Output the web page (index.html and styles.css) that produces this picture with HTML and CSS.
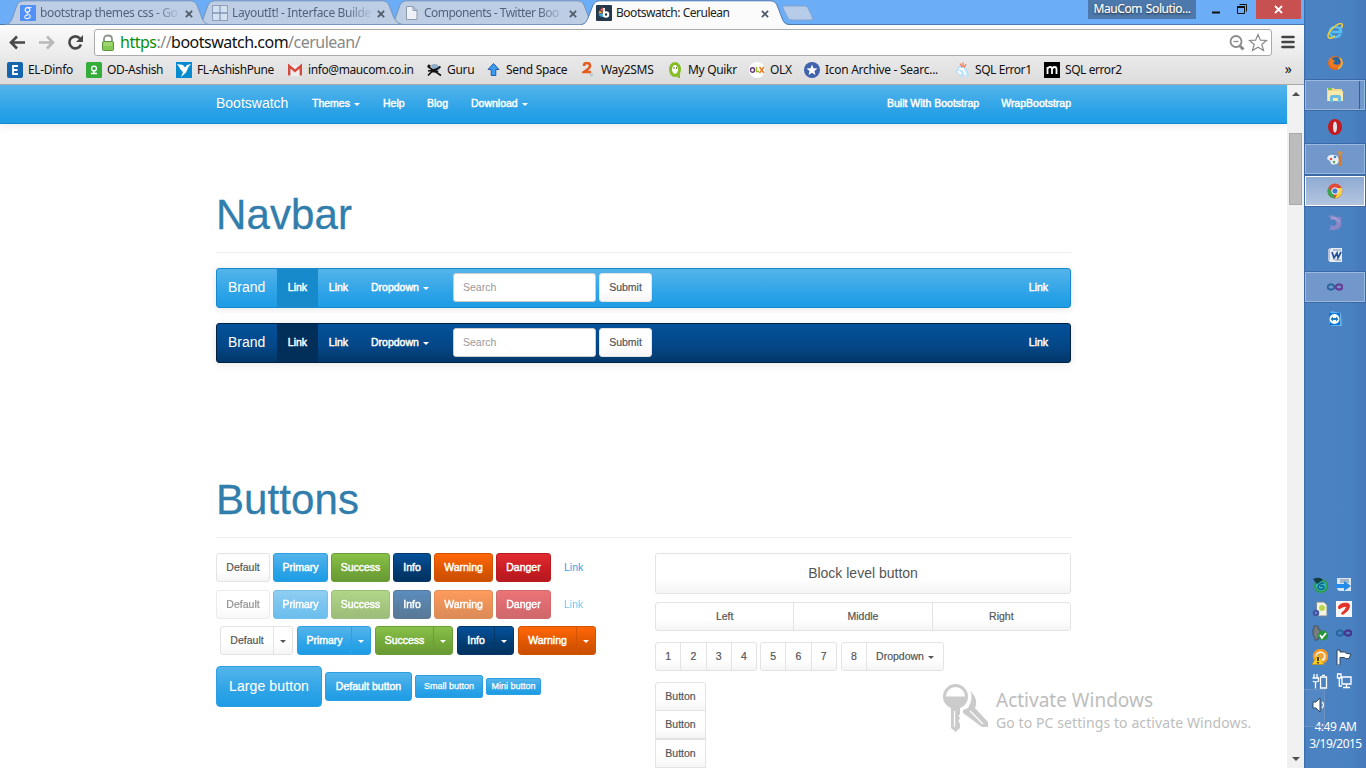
FILE: index.html
```html
<!DOCTYPE html>
<html lang="en">
<head>
<meta charset="utf-8">
<title>Bootswatch: Cerulean</title>
<link rel="stylesheet" href="styles.css">
</head>
<body>
<div class="browser">
  <header class="titlebar">
    <svg class="tab-shapes" width="830" height="26" viewBox="0 0 830 26">
      <path d="M0 24.500H830" stroke="#4c78b0"/>
      <g fill="#bccde4" stroke="#7795bd">
        <path d="M388 24.500C393 24 394 21 395 19L400 5Q402 .8 406 .8H577Q582 .8 584 5L589 18Q591 24 596 24.500Z"/>
        <path d="M196 24.500C201 24 202 21 203 19L208 5Q210 .8 214 .8H383Q387 .8 389 5L394 18Q397 24 402 24.500Z"/>
        <path d="M5 24.500C10 24 11 21 12 19L17 5Q19 .8 23 .8H191Q195 .8 197 5L202 18Q204 24 209 24.500Z"/>
      </g>
      <path d="M581 26V24.500C586 24 587 20 588 18L593 5Q595 .8 599 .8H770Q775 .8 777 5L782 18Q784 24.500 789 24.500V26Z" fill="#fbfbfb"/>
      <path d="M581 24.500C586 24 587 20 588 18L593 5Q595 .8 599 .8H770Q775 .8 777 5L782 18Q784 24.500 789 24.500" fill="none" stroke="#4c78b0"/>
      <path d="M784 6H804Q807 6 808 8L812.500 18Q813 20 811 20H792Q789 20 788 18L783 8Q782.500 6 784 6Z" fill="#b7cce8" stroke="#86a6cf"/>
    </svg>
    <div class="tabs">
      <div class="tab"><svg class="i16" viewBox="0 0 16 16"><rect width="16" height="16" rx="1" fill="#5290f5"/><ellipse cx="7.500" cy="4.800" rx="2.300" ry="2.300" fill="none" stroke="#e5eefe" stroke-width="1.300"/><path d="M9 2.500H11.500M8 7Q6 8.300 8 9Q11.200 10.200 10 12.500Q7.500 14.500 5 13Q3.800 10.500 8 9.800" fill="none" stroke="#e5eefe" stroke-width="1.200"/></svg><span class="tab-title t1">bootstrap themes css - Go</span><svg class="x" viewBox="0 0 9 9"><path d="M1 1L8 8M8 1L1 8"/></svg></div>
      <div class="tab"><svg class="i16" viewBox="0 0 16 16"><rect x=".7" y=".7" width="14.600" height="14.600" fill="#f3f6fb" stroke="#7b91b1"/><path d="M8 1V15M1 8H15" stroke="#7b91b1" stroke-width="1.300"/><path d="M2 2H7V7H2ZM9 2H14V7H9ZM2 9H7V14H2ZM9 9H14V14H9Z" fill="#d1e1f4"/></svg><span class="tab-title t2">LayoutIt! - Interface Builde</span><svg class="x" viewBox="0 0 9 9"><path d="M1 1L8 8M8 1L1 8"/></svg></div>
      <div class="tab"><svg class="i16" viewBox="0 0 16 16"><path d="M2.500 1.500H9L13 5.500V14.500H2.500ZM9 1.500V5.500H13" fill="#eef2f8" stroke="#8d9bad"/></svg><span class="tab-title t3">Components - Twitter Boo</span><svg class="x" viewBox="0 0 9 9"><path d="M1 1L8 8M8 1L1 8"/></svg></div>
      <div class="tab active"><svg class="i16" viewBox="0 0 16 16"><rect width="16" height="16" rx="1" fill="#26384b"/><path d="M7 2V7L4 5Z" fill="#ec5b4b"/><path d="M3.500 5.500L7 8L2.500 8.500Z" fill="#f2b33d"/><path d="M2.500 9L7 8.500V12Q3 12 2.500 9Z" fill="#38a4de"/><path d="M8 3V12" stroke="#fff" stroke-width="1.800"/><circle cx="10" cy="9.500" r="2.300" fill="none" stroke="#fff" stroke-width="2"/></svg><span class="tab-title t4">Bootswatch: Cerulean</span><svg class="x" viewBox="0 0 9 9"><path d="M1 1L8 8M8 1L1 8"/></svg></div>
    </div>
    <div class="window-controls"><span class="profile">MauCom Solutio...</span>
      <svg width="56" height="19" viewBox="0 0 56 19"><path d="M12 12.500H20" stroke="#111" stroke-width="2"/><path d="M39.500 4.500H46.500V11.500M37.500 7.500H44.500V13.500H37.500Z" fill="none" stroke="#111"/><path d="M37 7H45" stroke="#111" stroke-width="2"/></svg>
      <span class="close"><svg width="9" height="9" viewBox="0 0 9 9"><path d="M1 1L8 8M8 1L1 8" stroke="#fff" stroke-width="1.800"/></svg></span></div>
  </header>
  <div class="toolbar">
    <svg class="nav-icons" width="94" height="32" viewBox="0 0 94 32"><g fill="none" stroke-width="2.600"><path d="M25 17.500H11M17 11.500L11 17.500L17 23.500" stroke="#484848"/><path d="M39 17.500H53M47 11.500L53 17.500L47 23.500" stroke="#b8b8b8"/><path d="M80 13.500A6 6 0 1 0 81 19.500" stroke="#484848"/></g><path d="M83 10V17H76Z" fill="#484848"/></svg>
    <div class="omnibox">
      <svg width="14" height="18" viewBox="0 0 14 18"><path d="M3 8V5Q3 1.500 7 1.500T11 5V8" fill="none" stroke="#8d938c" stroke-width="1.800"/><rect x="1.500" y="7.500" width="11" height="9" rx="1" fill="#83c953" stroke="#5a9540"/><path d="M2.500 9H11.500M2.500 11H11.500" stroke="#b6e28f"/></svg>
      <span class="url"><span class="secure">https</span>://<span class="host">bootswatch.com</span>/cerulean/</span>
      <svg class="omni-right" width="40" height="20" viewBox="0 0 40 20"><g fill="none" stroke="#8a8a8a"><circle cx="7" cy="8.500" r="5.500" stroke-width="1.800"/><path d="M4.500 8.500H9.500" stroke-width="1.300"/><path d="M11 13L14.500 16.500" stroke-width="3"/><path d="M29 1.500L31.400 7.200L37.500 7.500L32.800 11.500L34.500 17.500L29 14.200L23.500 17.500L25.200 11.500L20.500 7.500L26.600 7.200Z" stroke-width="1.200"/></g></svg>
    </div>
    <svg class="menu-icon" width="14" height="14" viewBox="0 0 14 14"><path d="M1.500 2H12.500M1.500 7H12.500M1.500 12H12.500" stroke="#444" stroke-width="2.600" stroke-linecap="round"/></svg>
  </div>
  <nav class="bookmarks">
    <a class="bm b1"><svg class="i16" viewBox="0 0 16 16"><rect width="16" height="16" rx="2" fill="#1565ae"/><path d="M11 4H6V12H11M6 8H10.500" fill="none" stroke="#fff" stroke-width="1.800"/></svg><span>EL-Dinfo</span></a>
    <a class="bm b2"><svg class="i16" viewBox="0 0 16 16"><rect width="16" height="16" rx="1.500" fill="#35ad3a"/><circle cx="8" cy="6.500" r="2.400" fill="none" stroke="#fff" stroke-width="1.400"/><path d="M5 11.500H11M8 9V12" stroke="#fff" stroke-width="1.500"/></svg><span>OD-Ashish</span></a>
    <a class="bm b3"><svg class="i16" viewBox="0 0 16 16"><path d="M0 0H16V16H0Z" fill="#078bd0"/><path d="M1 2L7 3L9 5.500L11 3L15 2L12.500 5L10 10.500L5 15L7 10L4.500 7.500L2.500 4Z" fill="#fff"/></svg><span>FL-AshishPune</span></a>
    <a class="bm b4"><svg class="i16" viewBox="0 0 16 16"><path d="M1 3H15V14H1Z" fill="#eee"/><path d="M2.200 13.500V4L8 9L13.800 4V13.500" fill="none" stroke="#d54a3d" stroke-width="2.400"/></svg><span>info@maucom.co.in</span></a>
    <a class="bm b5"><svg class="i16" viewBox="0 0 16 16"><path d="M5 3Q12 0 14 7L11 10Q6 10 5 3" fill="#8badc8"/><path d="M2 4.500L6 7.500Q9 9 14.500 4.500M2 13.500L6 9.500L10 10L15 13.500M2 9L8 8L12 10" fill="none" stroke="#111" stroke-width="1.700"/><circle cx="3" cy="4" r="1.600" fill="#111"/></svg><span>Guru</span></a>
    <a class="bm b6"><svg class="i16" viewBox="0 0 16 16"><path d="M7.500 1.500L13 7.500H9.800V13.500H5.200V7.500H2Z" fill="#3d9aef" stroke="#1553a3" stroke-width=".9"/></svg><span>Send Space</span></a>
    <a class="bm b7"><svg class="i16" viewBox="0 0 16 16"><path d="M2 4Q2 1 5 1T8 4Q8 6 2 10H9" fill="none" stroke="#e45c20" stroke-width="2.600"/><path d="M7 12L11 11V14L9 15Z" fill="#bccbd0"/></svg><span>Way2SMS</span></a>
    <a class="bm b8"><svg class="i16" viewBox="0 0 16 16"><ellipse cx="7" cy="7.500" rx="4.500" ry="6" fill="#fff" stroke="#86bd26" stroke-width="3"/><path d="M8 12H12V16H10Z" fill="#86bd26"/><path d="M6 5V7M8.500 5V7" stroke="#657b43"/></svg><span>My Quikr</span></a>
    <a class="bm b9"><svg class="i16" viewBox="0 0 16 16"><circle cx="8" cy="8" r="8" fill="#fff"/><ellipse cx="3.500" cy="8" rx="2" ry="2.300" fill="none" stroke="#653579" stroke-width="1.400"/><path d="M7.500 5V9.500H10" fill="none" stroke="#9dbd29" stroke-width="1.600"/><path d="M10.500 5L15 11M15 5L10.500 11" stroke="#ee7e22" stroke-width="1.600"/></svg><span>OLX</span></a>
    <a class="bm b10"><svg class="i16" viewBox="0 0 16 16"><circle cx="8" cy="8" r="8" fill="#4162ad"/><path d="M8 2.500L9.500 6.300L13.500 6.500L10.400 9L11.500 13L8 10.700L4.500 13L5.600 9L2.500 6.500L6.500 6.300Z" fill="#fff"/></svg><span>Icon Archive - Searc...</span></a>
    <a class="bm b11"><svg class="i16" viewBox="0 0 16 16"><path d="M1 10L5 4L11 4L14 9L15 15L10 13L6 16L5 12Z" fill="#b9e2fa"/><path d="M6 1.500L8 5M9 .5V5M12 2L10 5.500" stroke="#ef7a5c" stroke-width="1.300"/><path d="M5 7L9 7L12 13M4 9L7 12" fill="none" stroke="#fff" stroke-width="2"/></svg><span>SQL Error1</span></a>
    <a class="bm b12"><svg class="i16" viewBox="0 0 16 16"><path d="M0 0H16V16H0Z"/><path d="M3.500 12V5M3.500 7Q4 5 6 5Q8 5 8 7V12M8 7Q9 5 10.500 5Q12.500 5 12.500 7V12" fill="none" stroke="#fff" stroke-width="1.800"/></svg><span>SQL error2</span></a>
    <span class="overflow">»</span>
  </nav>
  <div class="viewport">
    <main class="page">
      <nav class="topnav"><a class="brand">Bootswatch</a><a class="themes">Themes<i class="caret"></i></a><a class="help">Help</a><a class="blog">Blog</a><a>Download<i class="caret"></i></a><span class="nav-end"><a>Built With Bootstrap</a><a>WrapBootstrap</a></span></nav>
      <section class="container">
        <h1 class="h-navbar">Navbar</h1>
        <nav class="navbar"><a class="nbrand">Brand</a><a class="nlink on">Link</a><a class="nlink">Link</a><a class="ndrop">Dropdown<i class="caret"></i></a><span class="field">Search</span><span class="btn default submit">Submit</span><a class="nlink last">Link</a></nav>
        <nav class="navbar inverse"><a class="nbrand">Brand</a><a class="nlink on">Link</a><a class="nlink">Link</a><a class="ndrop">Dropdown<i class="caret"></i></a><span class="field">Search</span><span class="btn default submit">Submit</span><a class="nlink last">Link</a></nav>
        <h1 class="h-buttons">Buttons</h1>
        <div class="columns">
          <div class="col-left">
            <div class="row"><span class="btn default w54">Default</span><span class="btn primary w55">Primary</span><span class="btn success w59">Success</span><span class="btn info w38">Info</span><span class="btn warning w59">Warning</span><span class="btn danger w55">Danger</span><span class="linkbtn">Link</span></div>
            <div class="row disabled"><span class="btn default w54">Default</span><span class="btn primary w55">Primary</span><span class="btn success w59">Success</span><span class="btn info w38">Info</span><span class="btn warning w59">Warning</span><span class="btn danger w55">Danger</span><span class="linkbtn">Link</span></div>
            <div class="row splits">
              <div class="split"><span class="btn default w54">Default</span><span class="btn default tog"><i class="caret"></i></span></div>
              <div class="split"><span class="btn primary w55">Primary</span><span class="btn primary tog"><i class="caret"></i></span></div>
              <div class="split"><span class="btn success w59">Success</span><span class="btn success tog"><i class="caret"></i></span></div>
              <div class="split"><span class="btn info w38">Info</span><span class="btn info tog"><i class="caret"></i></span></div>
              <div class="split"><span class="btn warning w59">Warning</span><span class="btn warning tog"><i class="caret"></i></span></div>
            </div>
            <div class="row sizes"><span class="btn primary lg">Large button</span><span class="btn primary md">Default button</span><span class="btn primary sm">Small button</span><span class="btn primary xs">Mini button</span></div>
          </div>
          <div class="col-right">
            <span class="btn default block">Block level button</span>
            <div class="group justified"><span class="btn default">Left</span><span class="btn default">Middle</span><span class="btn default">Right</span></div>
            <div class="btn-toolbar"><div class="group"><span class="btn default num">1</span><span class="btn default num">2</span><span class="btn default num">3</span><span class="btn default num">4</span></div><div class="group"><span class="btn default num">5</span><span class="btn default num">6</span><span class="btn default num">7</span></div><div class="group g3"><span class="btn default num">8</span><span class="btn default drop">Dropdown<i class="caret"></i></span></div></div>
            <div class="vertical"><span class="btn default">Button</span><span class="btn default">Button</span><span class="btn default">Button</span></div>
          </div>
        </div>
      </section>
    </main>
    <div class="scrollbar"><i class="up"></i><i class="thumb"></i><i class="down"></i></div>
  </div>
</div>
<aside class="taskbar">
  <div class="apps">
    <div class="app"><svg class="i16" viewBox="0 0 16 16"><path d="M13.500 11Q12 14 8.500 14Q3 14 3 9Q3 4 8.500 4Q14 4 14 9H5" fill="none" stroke="#54c1f3" stroke-width="2.600"/><path d="M2 15Q-1 12 5 6Q12-1 15 1Q16 3 14 5M2 15Q5 16 8 13" fill="none" stroke="#f6cd38" stroke-width="1.500"/></svg></div>
    <div class="app"><svg class="i16" viewBox="0 0 16 16"><circle cx="8" cy="8" r="7" fill="#e66a1c"/><circle cx="9" cy="6.500" r="4.500" fill="#28649d"/><path d="M2 3L5 4L8 6L6 8L9 10L13 9Q11 13 7 13Q2 11 2 3" fill="#ed7b22"/><path d="M13 3Q18 9 11 14" fill="none" stroke="#f6bc3b" stroke-width="1.500"/></svg></div>
    <div class="app box stack"><svg class="i16" viewBox="0 0 16 16"><path d="M0 1H6L8 2H15V14H0Z" fill="#f1d98b"/><path d="M1 4H16V14H1Z" fill="#f8e9ac"/><path d="M3 15V10Q3 8 5 8H12Q14 8 14 10V15H11V11H6V15Z" fill="#6dbce1"/><path d="M1 2H5" stroke="#4eb542" stroke-width="1.500"/></svg></div>
    <div class="app"><svg class="i16" viewBox="0 0 16 16"><ellipse cx="8" cy="8" rx="7" ry="8" fill="#c41b20"/><ellipse cx="8" cy="8" rx="2" ry="5.500" fill="#dfe5ea"/></svg></div>
    <div class="app box"><svg class="i16" viewBox="0 0 16 16"><path d="M0 8Q1 3 7 4Q12 4 12 10Q10 15 4 13Q4 10 0 8" fill="#e9f1f5"/><circle cx="4" cy="8" r="1.300" fill="#de544b"/><circle cx="8" cy="6" r="1.300" fill="#4286ce"/><circle cx="7" cy="11" r="1.300" fill="#61aa56"/><path d="M13 5V15" stroke="#d97826" stroke-width="2.500"/><path d="M10 0L16 1L14 5H12Z" fill="#c9904f"/></svg></div>
    <div class="app box current"><svg class="i16" viewBox="0 0 16 16"><circle cx="8" cy="8" r="7.500" fill="#e24c38"/><path d="M1.200 5L6 10L8 15.500Q.5 15 .5 8Z" fill="#38a64e"/><path d="M8 5H15Q16.500 14 8 15.500L11 9Z" fill="#f8d43b"/><circle cx="8" cy="8" r="3.200" fill="#4479d3" stroke="#fff"/></svg></div>
    <div class="app"><svg class="i16" viewBox="0 0 16 16"><path d="M1 1Q6-1 10 2Q15 1 14 4Q16 11 11 14Q8 15 6 15L2 15L4 12L2 10L7 11Q10 10 9 7Q8 4 3 5L4 3Z" fill="#8b88ca"/><path d="M4 3Q10 2 12 7" fill="none" stroke="#b6b4e1"/></svg></div>
    <div class="app"><svg class="i16" viewBox="0 0 16 16"><path d="M1 2L5 1H15V15H3L1 13Z" fill="#e8edf5"/><path d="M2 2V13M6 3H14M8 13H14" stroke="#8398bb"/><path d="M5 5L7 11L10 6L11 11L14 5" fill="none" stroke="#264f9b" stroke-width="1.700"/></svg></div>
    <div class="app box"><svg class="i16" viewBox="0 0 16 16"><path d="M8 8Q5 4 2 6T2 10T8 8" fill="none" stroke="#24669c" stroke-width="2"/><path d="M8 8Q11 4 14 6T14 10T8 8" fill="none" stroke="#683c97" stroke-width="2.200"/></svg></div>
    <div class="app"><svg class="i16" viewBox="0 0 16 16"><path d="M4 0L14 2L15 15H5L2 12Z" fill="#63b2ed"/><path d="M2 2H13V14H3Z" fill="#0876d8"/><circle cx="7.500" cy="8" r="5" fill="#fff"/><path d="M3.500 8L6 5.500V7H9V5.500L11.500 8L9 10.500V9H6V10.500Z" fill="#1e79bf"/></svg></div>
  </div>
  <div class="tray">
    <svg class="i16" viewBox="0 0 16 16"><circle cx="9" cy="9" r="6" fill="#35b7ce" stroke="#2c9e49" stroke-width="2"/><path d="M1 2Q8-1 11 3L5 7Z" fill="#143f40"/><path d="M12 6Q6 6 6 11Q9 14 12 11Q12 8 8 9" fill="none" stroke="#125f83" stroke-width="1.400"/></svg>
    <svg class="i16" viewBox="0 0 16 16"><path d="M1 1H15V14H3L1 12Z" fill="#d9e4ee"/><path d="M4 3H13M4 5H13" stroke="#73879b"/><path d="M0 7H8V4L15 9L8 14V11H0Z" fill="#258be8"/></svg>
    <svg class="i16" viewBox="0 0 16 16"><path d="M4.500 1H12L15 4V15H4.500Z" fill="#f3f3e3" stroke="#788998"/><circle cx="10" cy="7" r="3" fill="#b9d651"/><circle cx="4" cy="12" r="2" fill="#b9c8e9" stroke="#4455a4" stroke-width="2.500"/></svg>
    <svg class="i16" viewBox="0 0 16 16"><path d="M0 0H16V16H0Z" fill="#f6f4f4"/><path d="M3 8Q1 4 7 2.500Q14 1 13.500 5.500Q13 10 6.500 13.500L5.500 12Q10 9 10.500 6Q9 4 3 8Z" fill="#e23227" stroke="#e23227"/></svg>
    <svg class="i16" viewBox="0 0 16 16"><path d="M2 1H6V4H8V10L6 13V15H3V13L1 10V4H2Z" fill="#777c81" stroke="#4a5056"/><circle cx="11" cy="10.500" r="5" fill="#27943c"/><path d="M8 10L10 13L14 8" fill="none" stroke="#fff" stroke-width="1.800"/></svg>
    <svg class="i16" viewBox="0 0 16 16"><path d="M8 8Q5 4 2 6T2 10T8 8" fill="none" stroke="#24669c" stroke-width="2"/><path d="M8 8Q11 4 14 6T14 10T8 8" fill="none" stroke="#49358e" stroke-width="2.200"/></svg>
    <svg class="i16" viewBox="0 0 16 16"><circle cx="8.500" cy="7.500" r="6.500" fill="#fff0d8" stroke="#f19824" stroke-width="2.500"/><circle cx="9" cy="7" r="3" fill="#f6a33b"/><path d="M6 5L12 15.500H0Z" fill="#ffcb22" stroke="#b58b16" stroke-width=".6"/><path d="M6 8V12M6 13V14.500" stroke="#222" stroke-width="1.600"/></svg>
    <svg class="i16" viewBox="0 0 16 16"><path d="M1 1H4V3H8.500Q10 5 15 5L13 9.500Q9.500 10.500 8 8.500H4V16H1Z" fill="#fff" stroke="#31465c"/></svg>
    <svg class="i16" viewBox="0 0 16 16"><g fill="none" stroke="#fff" stroke-width="1.300"><path d="M2 1V5M5 1V5M.5 5H6.500V8Q3.500 10 .8 8M3.500 9V15.500"/><path d="M8.500 4H14.500V15H8.500ZM10 2.300H13"/></g></svg>
    <svg class="i16" viewBox="0 0 16 16"><g fill="none" stroke="#fff" stroke-width="1.300"><path d="M6 4H15V11H6ZM10.500 11V14M7 14.500H14M1.500 1H5V5H1.500ZM3.300 5V13H6"/></g></svg>
    <svg class="i16" viewBox="0 0 16 16"><path d="M1 5H4L8 1V15L4 11H1Z" fill="#fff" stroke="#34495c"/><path d="M10 5Q13 8 10 11" fill="none" stroke="#fff" stroke-width="1.200"/></svg>
  </div>
  <div class="clock"><span class="time">4:49 AM</span><span class="date">3/19/2015</span></div>
  <i class="peek"></i>
</aside>
<div class="watermark">
  <svg width="46" height="49" viewBox="0 0 46 49" fill="#cbcbcb"><path d="M28 7Q36 17 32 24L45 38V43H39L20 29V26L25 24Q30 16 28 7Z"/><path d="M27 27L40 40" stroke="#fff" stroke-width="1.300"/><circle cx="12.500" cy="12.500" r="14" fill="#fff"/><path d="M8 23H17V30L15.500 32L17 34L15.500 37L17 40V44L12.500 48L8 44Z"/><circle cx="12.500" cy="12.500" r="12.500"/><path d="M3 12.500A9.500 9.500 0 0 1 22 12.500Z" fill="#fff"/><path d="M11.500 27V43" stroke="#fff" stroke-width="1.300"/></svg>
  <div><p class="wm-title">Activate Windows</p><p class="wm-sub">Go to PC settings to activate Windows.</p></div>
</div>
</body>
</html>
```
FILE: styles.css
```css
*{box-sizing:border-box}
body{margin:0;width:1366px;height:768px;overflow:hidden;display:flex;position:relative;background:#fff;font-family:"Liberation Sans",Arial,sans-serif;font-size:10.5px;color:#555}
svg{display:block;flex:none}
.i16{width:16px;height:16px}
.browser{width:1304px;height:768px;display:flex;flex-direction:column}
.titlebar,.toolbar,.bookmarks,.tab,.window-controls,.clock,.watermark{font-family:"Noto Sans","Open Sans",sans-serif}
.titlebar{height:25px;background:#6badf6;display:flex;justify-content:space-between;position:relative;border-bottom:1px solid #4c78b0;flex:none}
.tab-shapes{position:absolute;left:0;top:0;z-index:1}
.tabs{display:flex;padding-left:20px;position:relative;z-index:2}
.tab{width:192px;height:26px;display:flex;align-items:center;color:#52647c;font-size:12px}
.tab .i16{margin-right:4px}
.tab-title{width:140px;white-space:nowrap;letter-spacing:-.2px;line-height:20px;-webkit-mask-image:linear-gradient(90deg,#000 82%,transparent 101%)}
.t1{letter-spacing:-.38px}.t2{letter-spacing:-.38px}.t3{letter-spacing:-.52px}
.t4{letter-spacing:-.48px}
.active .tab-title{color:#222;-webkit-mask-image:none}
.x{width:8px;height:8px;margin:1px 0 0 5px;fill:none;stroke:#4d5968;stroke-width:1.900}
.window-controls{display:flex;align-items:flex-start;padding-right:3px}
.profile{width:108px;height:19px;background:#4c78ab;color:#fff;font-size:12px;line-height:18px;text-align:center;text-shadow:0 1px 2px #222;margin-right:4px;letter-spacing:-.7px;word-spacing:1px;-webkit-text-stroke:.15px #fff}
.profile{letter-spacing:-.4px}
.close{width:45px;height:19px;background:#c75050;display:grid;place-items:center}
.toolbar{height:32px;background:linear-gradient(#fbfbfb,#eaeaea);display:flex;align-items:flex-start;flex:none}
.omnibox{width:1178px;height:27px;margin-top:4px;border:1px solid #ababab;border-radius:3px;background:#fff;display:flex;align-items:center;padding-left:6px}
.url{font-size:16px;margin-left:5px;color:#888;white-space:nowrap;line-height:22px;letter-spacing:-.51px;margin-top:-2px}
.secure{color:#0a8f0a}.host{color:#111}
.omni-right{margin-left:auto;margin-right:2px}
.menu-icon{margin:10px 0 0 9px}
.bookmarks{height:28px;background:linear-gradient(#e9e9e9,#dcdcdc);border-bottom:1px solid #aaa;display:flex;align-items:center;padding:0 0 1px 7px;font-size:12px;color:#111;flex:none}
.bm{display:flex;align-items:center;gap:5px;white-space:nowrap;letter-spacing:-.32px;flex:none}
.bm span{margin-top:-2px}
.b3,.b12,.b11{letter-spacing:-.42px}.b4{letter-spacing:-.4px}
.b1{width:79px}.b2{width:90px}.b3{width:111px}.b4{width:139px}.b5{width:60px}.b6{width:96px;gap:4px}.b7{width:86px;gap:3px}.b8{width:81px;gap:4px}.b9{width:55px}.b10{width:150px;letter-spacing:-.28px}.b11{width:90px}
.overflow{margin:-3px 0 0 auto;padding-right:12px;font-size:14px}
.viewport{flex:1;display:flex;min-height:0}
.page{width:1287px;overflow:hidden;background:#fff}
.topnav{height:39px;padding:0 216px 2px;display:flex;align-items:center;color:#fff;background:linear-gradient(#54b4eb,#2fa4e7 60%,#1d9ce5);border-bottom:1px solid #178acc;box-shadow:0 1px 10px rgba(0,0,0,.1);-webkit-text-stroke:.45px #fff;text-shadow:0 1px 0 rgba(0,0,0,.1)}
.brand{font-size:14px;width:96px;-webkit-text-stroke:0}
.themes{width:71px}.help{width:44px}.blog{width:44px}
.nav-end{margin-left:auto;display:flex;gap:22px}
.caret{display:inline-block;border:3px solid transparent;border-top-color:currentColor;border-bottom:0;margin-left:4px;vertical-align:1px}
.container{width:855px;margin-left:216px}
h1{font-size:42px;line-height:46px;font-weight:400;color:#317eac;margin:0;border-bottom:1px solid #eee;-webkit-text-stroke:.3px #317eac;letter-spacing:.1px}
.h-navbar{height:61px;margin-top:68px;margin-bottom:15px}
.h-buttons{height:61px;margin-top:114px;margin-bottom:15px}
.navbar{height:40px;border:1px solid #178acc;border-radius:3px;margin-bottom:15px;background:linear-gradient(#54b4eb,#2fa4e7 60%,#1d9ce5);box-shadow:0 1px 8px rgba(0,0,0,.1);display:flex;align-items:flex-start;color:#fff;line-height:36px}
.navbar>a{-webkit-text-stroke:.45px #fff}
.navbar .nbrand{font-size:14px;width:60px;padding-left:11px;-webkit-text-stroke:0}
.nlink{height:38px;line-height:36px;width:41px;text-align:center}
.on{background:#178acc}
.inverse{background:linear-gradient(#04519b,#044687 60%,#033769);border-color:#022241}
.inverse .on{background:#022f5a}
.ndrop{width:94px;padding-left:12px}
.field{width:143px;height:29px;border:1px solid #ccc;border-radius:3px;background:#fff;color:#999;padding-left:9px;line-height:27px;margin:4px 3px 0 0}
.last{margin-left:auto;margin-right:11px}
.btn{height:29px;border:1px solid #e3e3e3;border-radius:3px;line-height:27px;text-align:center;white-space:nowrap;display:block}
.default{background:linear-gradient(#fff,#fff 60%,#f5f5f5);color:#555;-webkit-text-stroke:.2px #555}
.submit{width:53px;margin-top:4px}
.primary,.success,.info,.warning,.danger{color:#fff;-webkit-text-stroke:.45px #fff}
.primary{background:linear-gradient(#54b4eb,#2fa4e7 60%,#1d9ce5);border-color:#2b9fe0}
.success{background:linear-gradient(#88c149,#73a839 60%,#699934);border-color:#6b9e35}
.info{background:linear-gradient(#04519b,#033c73 60%,#02325f);border-color:#033767}
.warning{background:linear-gradient(#ff6707,#dd5600 60%,#c94e00);border-color:#d25200}
.danger{background:linear-gradient(#e12b31,#c71c22 60%,#b5191f);border-color:#ba1b20}
.columns{display:flex;justify-content:space-between}
.col-left{width:382px}.col-right{width:416px}
.row{display:flex;gap:3px;margin-bottom:8px}
.w54{width:54px}.w55{width:55px}.w59{width:59px}.w38{width:38px}
.linkbtn{line-height:28px;color:#2fa4e7;margin-left:10px}
.disabled{margin-bottom:7px}.disabled>*{opacity:.65}
.splits{gap:4px;padding-left:4px;margin-bottom:11px}
.split{display:flex}.split .btn:first-child{border-radius:3px 0 0 3px}
.tog{width:20px;margin-left:-1px;border-radius:0 3px 3px 0}
.tog .caret{margin:0}
.sizes{align-items:center}
.lg{width:106px;height:41px;line-height:39px;font-size:14px;letter-spacing:.1px;border-radius:4px;-webkit-text-stroke:.1px #fff}
.md{width:87px}.sm{width:68px;height:23px;line-height:21px;font-size:9px;border-radius:2px}.xs{width:55px;height:17px;line-height:15px;font-size:9px;border-radius:2px}
.sm,.xs{-webkit-text-stroke:.25px #fff}
.block{height:41px;line-height:39px;font-size:14px;margin-bottom:8px;-webkit-text-stroke:0}
.group{display:flex}
.group .btn{border-radius:0}.group .btn+.btn{margin-left:-1px}
.group .btn:first-child{border-radius:3px 0 0 3px}.group .btn:last-child{border-radius:0 3px 3px 0}
.justified .btn{flex:1}
.btn-toolbar{display:flex;gap:3px;margin:11px 0}
.num{width:26.250px}.g3{margin-left:1px}
.drop{width:78px}
.vertical{width:51px}.vertical .btn{border-radius:0;margin-bottom:-.6px}.vertical .btn:first-child{border-radius:3px 3px 0 0}
.scrollbar{width:17px;background:#f1f1f1;display:flex;flex-direction:column;align-items:center}
.up,.down{border:4px solid transparent;border-bottom:4px solid #505050;border-top:0;margin-top:7px}
.down{border-top:4px solid #505050;border-bottom:0;margin:auto 0 7px}
.thumb{width:13px;height:72px;margin-top:37px;background:#bcbcbc;border:1px solid #a8a8a8}
.taskbar{width:62px;background:linear-gradient(90deg,#356aab 0,#4a82c2 2px,#4981c1 48px,#4578b8);display:flex;flex-direction:column;position:relative;color:#fff;padding-top:16px}
.app{height:30px;margin:0 1px 2px;display:grid;place-items:center}
.box{background:#7197cb;border:1px solid #9bb8df;outline:1px solid #3b69a4}
.current{background:linear-gradient(#8eaad2,#b3c6e0);border-color:#fff}
.stack{box-shadow:inset -4px 0 #6f98ce,inset -5px 0 #345f9a}
.tray{display:grid;grid-template-columns:16px 16px;grid-auto-rows:16px;gap:8px;margin:241px 0 0 8px;position:relative;z-index:1}
.clock{display:flex;flex-direction:column;align-items:center;font-size:12px;line-height:17px;margin-top:5px;padding-left:1px;letter-spacing:-.5px}
.peek{position:absolute;left:0;top:689px;width:21px;height:38px;border:1px solid #6c91c1;border-left:0;background:rgba(255,255,255,.05)}
.watermark{position:absolute;left:943px;top:684px;display:flex;gap:7px;color:#bdbdbd}
.watermark p{margin:0;white-space:nowrap}
.wm-title{font-size:19px;line-height:26px;padding-top:3px}
.wm-sub{font-size:14px;line-height:20px;letter-spacing:.09px}
```
